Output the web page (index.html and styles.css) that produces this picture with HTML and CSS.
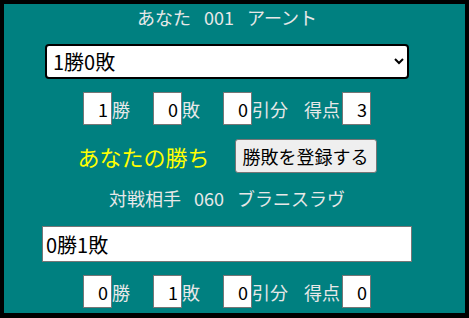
FILE: index.html
```html
<!DOCTYPE html>
<html>
<head>
    <meta charset="utf-8">
    <title>対戦結果</title>
    <link rel="stylesheet" href="styles.css">
</head>
<body>
    <main class="board">
        <p class="player"><span>あなた</span><span>001</span><span>アーント</span></p>

        <select class="result-select">
            <option>1勝0敗</option>
            <option>0勝1敗</option>
            <option>引分</option>
        </select>

        <div class="score">
            <span class="pair"><input class="num" value="1">勝</span>
            <span class="pair"><input class="num" value="0">敗</span>
            <span class="pair pair-draw"><input class="num" value="0">引分</span>
            <span class="pair">得点<input class="num" value="3"></span>
        </div>

        <div class="verdict">
            <span class="win">あなたの勝ち</span>
            <button class="register">勝敗を登録する</button>
        </div>

        <p class="player player-opponent"><span>対戦相手</span><span>060</span><span>ブラニスラヴ</span></p>

        <input class="result-text" value="0勝1敗" readonly>

        <div class="score">
            <span class="pair"><input class="num" value="0">勝</span>
            <span class="pair"><input class="num" value="1">敗</span>
            <span class="pair pair-draw"><input class="num" value="0">引分</span>
            <span class="pair">得点<input class="num" value="0"></span>
        </div>
    </main>
</body>
</html>
```

FILE: styles.css
```css
:root {
    font-family: "Noto Sans CJK JP", "Noto Sans", sans-serif;
}
html, body {
    height: 100%;
    margin: 0;
}

.board {
    box-sizing: border-box;
    height: 318px;
    border: 4px solid #000;
    border-bottom-width: 5px;
    background: #008080;
    color: #e8e8e8;
    padding: 1px 15px 0 0;
    display: flex;
    flex-direction: column;
    align-items: center;
    font-size: 18px;
}

.player {
    margin: 0;
    height: 24px;
    line-height: 24px;
    display: flex;
    gap: 13px;
}

.player-opponent {
    margin-top: 13px;
}

.result-select {
    margin-top: 15px;
    width: 364px;
    height: 35px;
    border: 2px solid #000;
    border-radius: 4px;
    background: #fff;
    color: #000;
    font-family: inherit;
    font-size: 20px;
    padding: 0 2px;
}

.score {
    margin-top: 13px;
    display: flex;
    align-items: center;
    line-height: 24px;
}

.pair {
    display: flex;
    align-items: center;
    margin-right: 23px;
}
.pair-draw {
    margin-right: 16px;
}
.pair:last-child {
    margin-right: 0;
}
.pair:last-child .num {
    margin-left: 2px;
}

.num {
    box-sizing: border-box;
    width: 29px;
    height: 33px;
    border: 1px solid #767676;
    background: #fff;
    color: #000;
    font-family: inherit;
    font-size: 18px;
    text-align: right;
    padding: 0 3px 0 0;
}

.verdict {
    margin-top: 14px;
    display: flex;
    align-items: center;
    gap: 25px;
}

.win {
    color: #ffff00;
    font-size: 22px;
    line-height: 30px;
}

.register {
    height: 34px;
    padding: 0 7px;
    border: 1px solid #767676;
    border-radius: 3px;
    background: #efefef;
    color: #000;
    font-family: inherit;
    font-size: 18px;
}

.result-text {
    box-sizing: border-box;
    margin-top: 16px;
    width: 370px;
    height: 36px;
    border: 1px solid #767676;
    background: #fff;
    color: #000;
    font-family: inherit;
    font-size: 20px;
    padding: 0 3px;
}
```
